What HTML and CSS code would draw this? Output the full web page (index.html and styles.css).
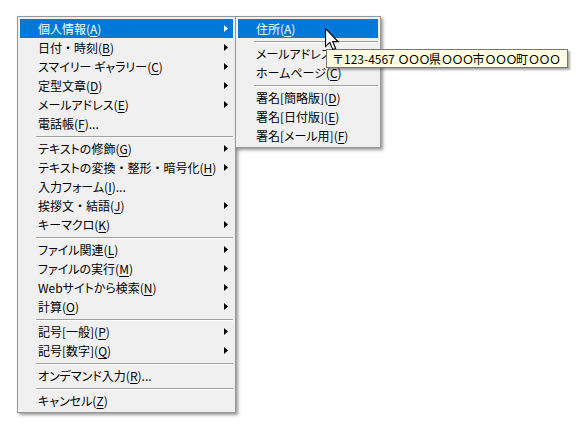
FILE: index.html
```html
<!DOCTYPE html>
<html lang="ja">
<head>
<meta charset="utf-8">
<title>Menu</title>
<link rel="stylesheet" href="styles.css">
</head>
<body>
<div class="desk">
  <div class="menu main">
    <div class="item hl"><span class="label">個人情報(<u>A</u>)</span><span class="arrow"></span></div>
    <div class="item"><span class="label">日付<span class="dot">・</span>時刻(<u>B</u>)</span><span class="arrow"></span></div>
    <div class="item"><span class="label">スマイリー ギャラリー(<u>C</u>)</span><span class="arrow"></span></div>
    <div class="item"><span class="label">定型文章(<u>D</u>)</span><span class="arrow"></span></div>
    <div class="item"><span class="label">メールアドレス(<u>E</u>)</span><span class="arrow"></span></div>
    <div class="item"><span class="label">電話帳(<u>F</u>)...</span></div>
    <div class="sep"></div>
    <div class="item"><span class="label">テキストの修飾(<u>G</u>)</span><span class="arrow"></span></div>
    <div class="item"><span class="label">テキストの変換<span class="dot">・</span>整形<span class="dot">・</span>暗号化(<u>H</u>)</span><span class="arrow"></span></div>
    <div class="item"><span class="label">入力フォーム(<u>I</u>)...</span></div>
    <div class="item"><span class="label">挨拶文<span class="dot">・</span>結語(<u>J</u>)</span><span class="arrow"></span></div>
    <div class="item"><span class="label">キーマクロ(<u>K</u>)</span><span class="arrow"></span></div>
    <div class="sep"></div>
    <div class="item"><span class="label">ファイル関連(<u>L</u>)</span><span class="arrow"></span></div>
    <div class="item"><span class="label">ファイルの実行(<u>M</u>)</span><span class="arrow"></span></div>
    <div class="item"><span class="label">Webサイトから検索(<u>N</u>)</span><span class="arrow"></span></div>
    <div class="item"><span class="label">計算(<u>O</u>)</span><span class="arrow"></span></div>
    <div class="sep"></div>
    <div class="item"><span class="label">記号[一般](<u>P</u>)</span><span class="arrow"></span></div>
    <div class="item"><span class="label">記号[数字](<u>Q</u>)</span><span class="arrow"></span></div>
    <div class="sep"></div>
    <div class="item"><span class="label">オンデマンド入力(<u>R</u>)...</span></div>
    <div class="sep"></div>
    <div class="item"><span class="label">キャンセル(<u>Z</u>)</span></div>
  </div>
  <div class="menu sub">
    <div class="item hl"><span class="label">住所(<u>A</u>)</span></div>
    <div class="sep"></div>
    <div class="item"><span class="label">メールアドレス(<u>B</u>)</span></div>
    <div class="item"><span class="label">ホームページ(<u>C</u>)</span></div>
    <div class="sep"></div>
    <div class="item"><span class="label">署名[簡略版](<u>D</u>)</span></div>
    <div class="item"><span class="label">署名[日付版](<u>E</u>)</span></div>
    <div class="item"><span class="label">署名[メール用](<u>F</u>)</span></div>
  </div>
  <div class="tooltip">〒123-4567 <span class="oo">ＯＯＯ</span>県<span class="oo">ＯＯＯ</span>市<span class="oo">ＯＯＯ</span>町<span class="oo">ＯＯＯ</span></div>
  <svg class="cursor" width="14" height="23" viewBox="0 0 12.5 20.5">
    <path d="M0.5 0.5 L0.5 16.5 L4.3 12.9 L7 19.3 L9.5 18.3 L6.9 12.1 L11.6 12.1 Z" fill="#fff" stroke="#000" stroke-width="1" stroke-linejoin="miter"/>
  </svg>
</div>
</body>
</html>
```

FILE: styles.css
```css
html, body {
  margin: 0;
  padding: 0;
  background: #ffffff;
}

.desk {
  position: relative;
  width: 580px;
  height: 430px;
  box-sizing: border-box;
  padding: 16px 0 0 17px;
  display: flex;
  align-items: flex-start;
  font-family: "Noto Sans CJK JP", "Noto Sans", sans-serif;
  font-size: 12px;
  color: #000;
}

.menu {
  box-sizing: border-box;
  background: #f0f0f0;
  border: 1px solid #979797;
  padding: 2px;
  box-shadow: 2px 2px 3px rgba(0, 0, 0, 0.4);
  display: flex;
  flex-direction: column;
  font-feature-settings: "palt";
}

.main {
  width: 219px;
}

.sub {
  width: 146px;
  margin-left: -1px;
}

.item {
  height: 19px;
  display: flex;
  align-items: center;
  padding: 0 3px 0 18px;
  line-height: 19px;
  white-space: nowrap;
}

.label {
  flex: 1;
}

.label u {
  text-underline-offset: 2px;
}

.dot {
  font-feature-settings: normal;
}

.item.hl {
  background: #0078d7;
  color: #fff;
}

.arrow {
  width: 4px;
  height: 7px;
  background: currentColor;
  clip-path: polygon(0 0, 100% 50%, 0 100%);
  margin-right: 2px;
}

.sep {
  height: 0;
  margin: 3px 0 1px 16px;
  border-top: 1px solid #a0a0a0;
  border-bottom: 1px solid #ffffff;
}

.tooltip {
  position: absolute;
  left: 326px;
  top: 49px;
  width: 242px;
  height: 19px;
  box-sizing: border-box;
  background: #ffffe1;
  border: 1px solid #767676;
  padding: 0 0 0 5px;
  line-height: 17px;
  white-space: nowrap;
  box-shadow: 2px 2px 2px rgba(0, 0, 0, 0.35);
  color: #000;
}

.oo {
  letter-spacing: -1.5px;
}

.cursor {
  position: absolute;
  left: 325px;
  top: 28px;
}
```
